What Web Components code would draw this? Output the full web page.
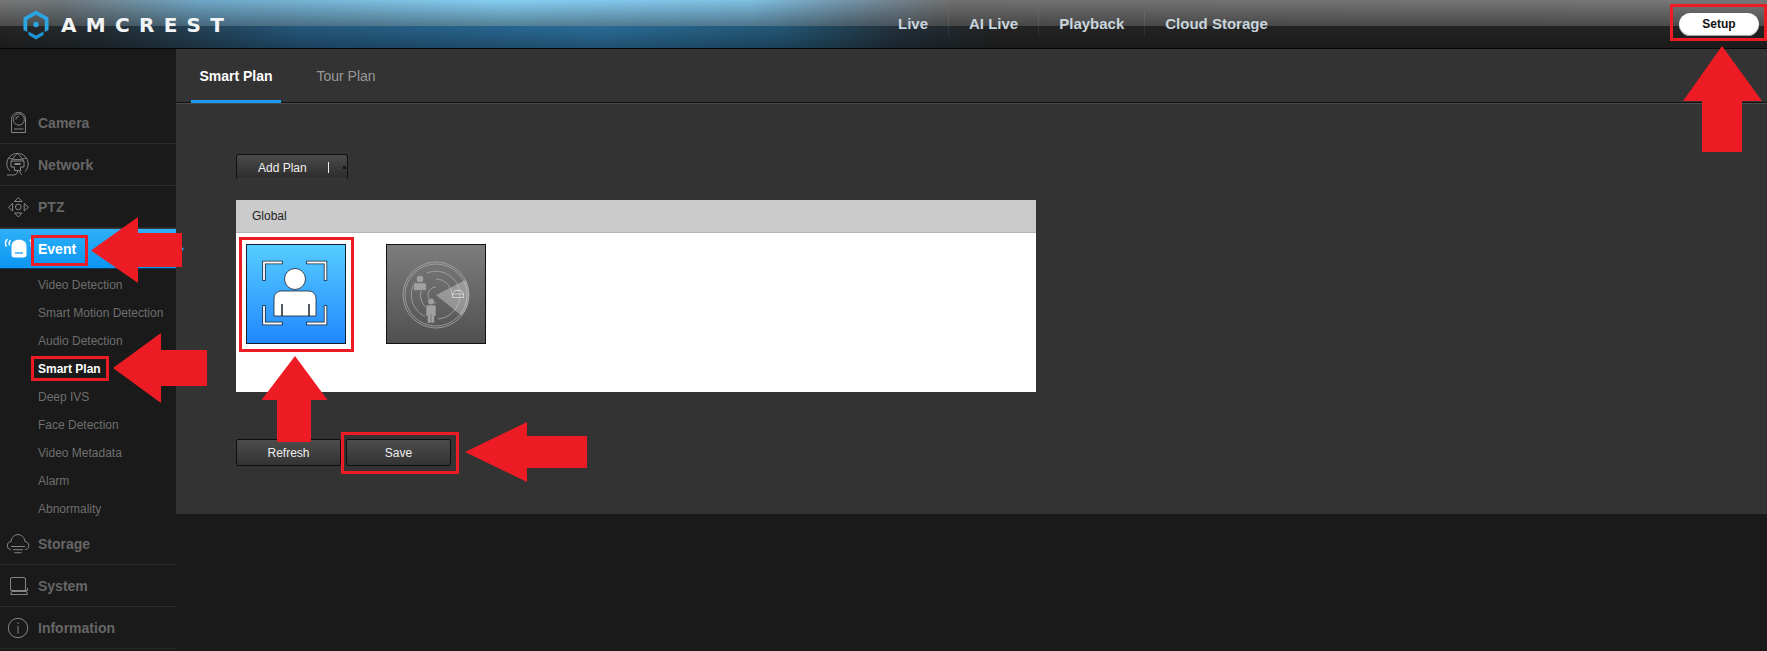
<!DOCTYPE html>
<html>
<head>
<meta charset="utf-8">
<title>Smart Plan</title>
<style>
    html, body{ margin:0; padding:0; background:#1a1a1a; }
    body{ width:1767px; height:651px; overflow:hidden; position:relative; font-family:"Liberation Sans", Arial, sans-serif; }
</style>
</head>
<body>
<app-header>
    <top-link slot="nav">Live</top-link>
    <top-link slot="nav">AI Live</top-link>
    <top-link slot="nav">Playback</top-link>
    <top-link slot="nav" last>Cloud Storage</top-link>
</app-header>
<page-body>
    <side-menu slot="side"></side-menu>
    <plan-page slot="main"></plan-page>
</page-body>
<red-marks></red-marks>

<script>
const ICONS = {
    camera: `<path d="M11.5 132.500V119.500C11.500 115 14.500 112.500 18.500 112.500C22.500 112.500 25.500 115 25.500 119.500V132.500Z"/><circle cx="18.800" cy="119.500" r="5.600"/><path d="M15.800 119.500A3 3 0 0 1 18.800 116.500"/><path d="M14 129H23.500"/>`,
    network: `<path d="M10 171C7.500 168.500 6.800 166.500 6.800 164C6.800 158 11.500 153.400 17.500 153.400C23.500 153.400 28.200 158 28.200 164C28.200 166.500 27.300 169 25 171.500"/><path d="M9 158C13 160 22 160 26 158M17.500 153.500C13.500 157 12 159.500 11.500 161M17.500 153.500C21.500 157 23 159.500 23.500 161"/><path d="M11 161H24V167H20.500V170.500H14.500V167H11Z"/><path d="M14.500 163H20.500V165H14.500Z" fill="#858585" stroke="none"/><path d="M7 175H13.500C16 175 17.500 173.500 17.500 171M22 175C20.500 174 20 172.500 20 171"/>`,
    ptz: `<circle cx="18.300" cy="207" r="2.800"/><path d="M18.300 197.500L14.500 201.500H22.100ZM18.300 217L14.500 213H22.100ZM8.500 207.200L12.600 203.400V211ZM28.400 207.200L24.200 203.400V211Z"/>`,
    storage: `<path d="M11 549.500C8.500 549.500 7.300 547.500 7.300 545.500C7.300 543.200 9 541.600 11 541.600C11.300 537.500 14.500 534.600 18 534.600C21.500 534.600 24.600 537.500 25 541.600C27.200 541.600 28.800 543.200 28.800 545.500C28.800 547.500 27.500 549.500 25 549.500"/><path d="M11 546.500H25M13 549.700H23M14.500 552.700H21.500"/>`,
    system: `<rect x="10.500" y="577.500" width="15" height="13" rx="1.500"/><path d="M27.500 588V590.500H10.500"/><path d="M11.800 591.500H26.500L27.500 594.500H10.500Z"/>`,
    info: `<circle cx="18" cy="628" r="9.700"/><path d="M18 626V633.500M18 622.500V624"/>`
};

// tiny helper for shadow + template
function mount(el, html) {
    const root = el.attachShadow({ mode: "open" });
    const template = document.createElement("template");
    template.innerHTML = html;
    root.appendChild(template.content.cloneNode(true));
    return root;
}

class AppHeader extends HTMLElement{
    constructor(){
        super()
        mount(this, `
            <style>
                :host{
                    display:flex;
                    align-items:center;
                    height:48px;
                    border-bottom:1px solid #050505;
                    background:
                        linear-gradient(to bottom, rgba(0,0,0,0) 0, rgba(0,0,0,.38) 26px, rgba(0,0,0,0) 26px, rgba(0,0,0,.25) 48px),
                        linear-gradient(to right, #787878 0, #70777b 60px, #6fa6c6 200px, #86cef2 500px, #7fbfe2 750px, #7393a8 850px, #707070 950px, #787878 1767px) 0 0 / 100% 26px no-repeat,
                        linear-gradient(to right, #242424 0, #242c32 100px, #24587c 300px, #2a6c98 600px, #235776 780px, #22303a 900px, #232323 1000px, #232323 1767px) 0 26px / 100% 22px no-repeat;
                    color:#fff;
                }
                .logo{
                    display:flex;
                    align-items:center;
                    margin-left:23px;
                    padding-top:1px;
                    width:875px;
                    flex:none;
                }
                .logo svg{ display:block; flex:none; }
                .word{
                    margin-left:12px;
                    font:bold 20px "DejaVu Sans", sans-serif;
                    letter-spacing:9.3px;
                    line-height:24px;
                    color:#f2f4f5;
                }
                nav{ display:flex; align-items:center; flex:1; }
                .setup{
                    width:80px;
                    height:23px;
                    margin-right:8px;
                    border-radius:11.5px;
                    background:#fff;
                    box-shadow:inset 0 -1px 1px #999;
                    color:#111;
                    font:bold 12px "Liberation Sans", Arial, sans-serif;
                    display:flex;
                    align-items:center;
                    justify-content:center;
                }
            </style>
            <div class="logo">
                <svg width="26" height="30" viewBox="0 0 26 30">
                    <path d="M13 0.500L25.500 7.500V20L21.800 22V9.800L13 4.800L4.200 9.800V22L0.500 20V7.500Z" fill="#2ba6e2"/>
                    <path d="M5.500 21.500L13 25.500L20.500 21.500V25L13 29.500L5.500 25Z" fill="#1d94d6"/>
                    <circle cx="13" cy="14.500" r="2.700" fill="#2ba6e2"/>
                </svg>
                <span class="word">AMCREST</span>
            </div>
            <nav><slot name="nav"></slot></nav>
            <div class="setup">Setup</div>
        `)
    }
}

class TopLink extends HTMLElement{
    constructor(){
        super()
        mount(this, `
            <style>
                :host{
                    display:block;
                    padding:0 20px 0 0;
                    margin-right:20px;
                    height:26px;
                    font:bold 15px/26px "Liberation Sans", Arial, sans-serif;
                    color:#c9d5dc;
                    border-right:1px solid rgba(255,255,255,.07);
                }
                :host([last]){ border-right:none; }
            </style>
            <slot></slot>
        `)
    }
}

class PageBody extends HTMLElement{
    constructor(){
        super()
        mount(this, `
            <style>
                :host{ display:flex; align-items:flex-start; height:602px; }
                .side{ width:176px; flex:none; }
                .main{ flex:1; min-width:0; }
            </style>
            <div class="side"><slot name="side"></slot></div>
            <div class="main"><slot name="main"></slot></div>
        `)
    }
}

class SideItem extends HTMLElement{
    constructor(){
        super()
        const top = Number(this.getAttribute("top"))
        const icon = ICONS[this.getAttribute("icon")]
        mount(this, `
            <style>
                :host{
                    display:flex;
                    align-items:center;
                    box-sizing:border-box;
                    height:42px;
                    padding-left:38px;
                    position:relative;
                    border-bottom:1px solid #2a2a2a;
                    font:bold 14px "Liberation Sans", Arial, sans-serif;
                    color:#666;
                }
                svg{
                    position:absolute;
                    left:0;
                    top:0;
                    width:40px;
                    height:42px;
                    fill:none;
                    stroke:#858585;
                    stroke-width:1;
                }
            </style>
            <svg viewBox="0 ${top} 40 42">${icon}</svg>
            <slot></slot>
        `)
    }
}

class SideActive extends HTMLElement{
    constructor(){
        super()
        mount(this, `
            <style>
                :host{
                    display:flex;
                    align-items:center;
                    box-sizing:border-box;
                    height:41px;
                    padding-left:38px;
                    position:relative;
                    background:linear-gradient(to bottom, #2fb0f7 0, #0a96f2 100%);
                    border-top:1px solid #3a3a3a;
                    border-bottom:1px solid #0d3a5c;
                    font:bold 14px "Liberation Sans", Arial, sans-serif;
                    color:#fff;
                }
                :host::after{
                    content:"";
                    position:absolute;
                    left:100%;
                    top:12px;
                    border-left:8px solid #1aa0f4;
                    border-top:8px solid transparent;
                    border-bottom:8px solid transparent;
                }
                svg{ position:absolute; left:0; top:0; }
            </style>
            <svg width="36" height="39" viewBox="0 229 36 39">
                <path d="M11.500 255V246.500C11.500 242 14.500 239.800 19 239.800C23.500 239.800 26.500 242 26.500 246.500V255C26.500 256.500 25.500 257.500 24 257.500H14C12.500 257.500 11.500 256.500 11.500 255Z" fill="#fff"/>
                <path d="M15 253H23" stroke="#1a9ff2" stroke-width="1.300"/>
                <g fill="none" stroke="#fff" stroke-width="1.400">
                    <path d="M6.500 246.500C4.800 244 5.300 241.500 7.300 239"/>
                    <path d="M9.800 245.500C8.700 243.700 9 242 10.500 240.300"/>
                    <path d="M30.800 246.500C32 244 31.600 241.800 30 239.500"/>
                </g>
            </svg>
            <slot></slot>
        `)
    }
}

class SideSub extends HTMLElement{
    constructor(){
        super()
        mount(this, `
            <style>
                :host{
                    display:flex;
                    align-items:center;
                    height:28px;
                    padding-left:38px;
                    font:12px "Liberation Sans", Arial, sans-serif;
                    color:#6e6e6e;
                }
                :host([on]){ color:#fff; font-weight:bold; }
            </style>
            <slot></slot>
        `)
    }
}

class SideMenu extends HTMLElement{
    constructor(){
        super()
        mount(this, `
            <style>
                :host{ display:block; padding-top:53px; }
                .subs{ padding-top:2px; }
            </style>
            <side-item icon="camera" top="102">Camera</side-item>
            <side-item icon="network" top="144">Network</side-item>
            <side-item icon="ptz" top="186">PTZ</side-item>
            <side-active>Event</side-active>
            <div class="subs">
                <side-sub>Video Detection</side-sub>
                <side-sub>Smart Motion Detection</side-sub>
                <side-sub>Audio Detection</side-sub>
                <side-sub on>Smart Plan</side-sub>
                <side-sub>Deep IVS</side-sub>
                <side-sub>Face Detection</side-sub>
                <side-sub>Video Metadata</side-sub>
                <side-sub>Alarm</side-sub>
                <side-sub>Abnormality</side-sub>
            </div>
            <side-item icon="storage" top="523">Storage</side-item>
            <side-item icon="system" top="565">System</side-item>
            <side-item icon="info" top="607">Information</side-item>
        `)
    }
}

class DarkButton extends HTMLElement{
    constructor(){
        super()
        mount(this, `
            <style>
                :host{
                    display:flex;
                    align-items:center;
                    justify-content:center;
                    box-sizing:border-box;
                    width:105px;
                    height:27px;
                    border:1px solid #0e0e0e;
                    border-radius:2px;
                    background:linear-gradient(to bottom, #4c4c4c 0, #333 100%);
                    color:#eee;
                    font:12px "Liberation Sans", Arial, sans-serif;
                }
            </style>
            <slot></slot>
        `)
    }
}

class SplitButton extends HTMLElement{
    constructor(){
        super()
        mount(this, `
            <style>
                :host{
                    display:flex;
                    align-items:center;
                    box-sizing:border-box;
                    width:112px;
                    height:25px;
                    padding:2px 0 0 21px;
                    border:1px solid #111;
                    border-bottom-color:#3a3a3a;
                    border-radius:3px 3px 0 0;
                    background:linear-gradient(to bottom, #4a4a4a 0, #2d2d2d 100%);
                    color:#f0f0f0;
                    font:12px "Liberation Sans", Arial, sans-serif;
                }
                .bar{ width:1px; height:11px; background:#eee; margin-left:21px; }
                .dot{ width:3px; height:3px; background:#151515; margin:0 0 1px 14px; }
            </style>
            <slot></slot>
            <span class="bar"></span>
            <span class="dot"></span>
        `)
    }
}

class PlanTile extends HTMLElement{
    constructor(){
        super()
        const kind = this.getAttribute("kind")
        const faceIcon = `
            <g fill="none" stroke="#1a2430" stroke-width="3.400" stroke-linecap="square">
                <path d="M35 18.500H18V35M62 18.500H79.500V35M18 63V79.500H35M79.500 63V79.500H62"/>
            </g>
            <g fill="none" stroke="#fff" stroke-width="1.800" stroke-linecap="square">
                <path d="M35 18.500H18V35M62 18.500H79.500V35M18 63V79.500H35M79.500 63V79.500H62"/>
            </g>
            <circle cx="49" cy="35" r="10.500" fill="#fff" stroke="#1a2430" stroke-width=".8"/>
            <path d="M28 72V55C28 50 31 47 36 47H62C67 47 70 50 70 55V72Z" fill="#fff" stroke="#1a2430" stroke-width=".8"/>
            <path d="M36 60V72M63 60V72" stroke="#1a2430" stroke-width="1.500"/>`
        const radarIcon = `
            <g fill="none" stroke="#a8a8a8" stroke-width=".8">
                <circle cx="50" cy="51" r="33"/>
                <circle cx="50" cy="51" r="31"/>
                <path d="M29 38A24 24 0 0 0 39 72.500M52 75A24 24 0 0 0 74 51A24 24 0 0 0 41 29"/>
                <path d="M35 47A16 16 0 0 0 43 65.500M50 35A16 16 0 0 1 66 51"/>
                <path d="M50 43A8 8 0 1 0 50 59"/>
            </g>
            <path d="M50 51L79.400 36A33 33 0 0 1 75.600 71.800Z" fill="#dcdcdc" fill-opacity=".42"/>
            <path d="M66.500 53.500V49.500L69 46.500H75L77.500 49.500V53.500Z" fill="none" stroke="#d8d8d8" stroke-width=".9"/>
            <path d="M66 50H78" stroke="#d8d8d8" stroke-width=".8"/>
            <circle cx="34" cy="35" r="3.300" fill="#a0a0a0"/>
            <path d="M27.500 46.500V41C27.500 39.500 29 38.800 30 38.800H38C39 38.800 40.500 39.500 40.500 41V46.500Z" fill="#a0a0a0" stroke="#5c5c5c" stroke-width=".5"/>
            <circle cx="45" cy="57.500" r="2.900" fill="#a0a0a0"/>
            <path d="M40 72V63C40 61.500 41 61 42 61H48C49 61 50 61.500 50 63V72H48.500V79H41.500V72Z" fill="#a0a0a0" stroke="#5c5c5c" stroke-width=".5"/>
            <path d="M45 70V79" stroke="#666" stroke-width=".7"/>`
        mount(this, `
            <style>
                :host{
                    display:block;
                    box-sizing:border-box;
                    width:100px;
                    height:100px;
                    border:1px solid #16202c;
                }
                :host([kind="face"]){ background:linear-gradient(to bottom, #56ccff 0, #2288ff 100%); }
                :host([kind="radar"]){ background:linear-gradient(to bottom, #7d7d7d 0, #505050 100%); border-color:#141414; }
                svg{ display:block; margin:-1px; }
            </style>
            <svg width="100" height="100" viewBox="0 0 100 100">${kind === "face" ? faceIcon : radarIcon}</svg>
        `)
    }
}

class PlanPanel extends HTMLElement{
    constructor(){
        super()
        mount(this, `
            <style>
                :host{ display:block; width:800px; height:192px; background:#fff; margin-top:21px; }
                header{
                    box-sizing:border-box;
                    height:33px;
                    padding-left:16px;
                    display:flex;
                    align-items:center;
                    background:#cbcbcb;
                    border-bottom:1px solid #b4b4b4;
                    color:#222;
                    font:12px "Liberation Sans", Arial, sans-serif;
                }
                .tiles{ display:flex; gap:40px; padding:11px 0 0 10px; }
            </style>
            <header><slot name="title"></slot></header>
            <div class="tiles"><slot></slot></div>
        `)
    }
}

class PlanPage extends HTMLElement{
    constructor(){
        super()
        mount(this, `
            <style>
                :host{ display:block; height:465px; background:#333; }
                .tabs{
                    box-sizing:border-box;
                    height:55px;
                    display:flex;
                    align-items:stretch;
                    padding-left:15px;
                    gap:20px;
                    border-bottom:1px solid #4c4c4c;
                    box-shadow:inset 0 -1px 0 #111;
                }
                .tab{
                    box-sizing:border-box;
                    display:flex;
                    align-items:center;
                    justify-content:center;
                    height:54px;
                    width:90px;
                    padding-top:3px;
                    font:14px "Liberation Sans", Arial, sans-serif;
                    color:#999;
                    border-bottom:3px solid transparent;
                }
                .tab.on{ color:#fff; font-weight:bold; border-bottom-color:#1c9cf0; }
                .body{ padding:50px 0 0 60px; }
                .row{ display:flex; gap:5px; margin-top:47px; }
            </style>
            <div class="tabs">
                <div class="tab on">Smart Plan</div>
                <div class="tab">Tour Plan</div>
            </div>
            <div class="body">
                <split-button>Add Plan</split-button>
                <plan-panel>
                    <span slot="title">Global</span>
                    <plan-tile kind="face"></plan-tile>
                    <plan-tile kind="radar"></plan-tile>
                </plan-panel>
                <div class="row">
                    <dark-button>Refresh</dark-button>
                    <dark-button>Save</dark-button>
                </div>
            </div>
        `)
    }
}

// the red arrows and boxes somebody drew on the screenshot
class RedMarks extends HTMLElement{
    constructor(){
        super()
        const box = (x, y, w, h) => `<rect x="${x}" y="${y}" width="${w}" height="${h}" fill="none" stroke="#ed1c24" stroke-width="3"/>`
        mount(this, `
            <style>
                :host{ position:absolute; left:0; top:0; width:1767px; height:651px; pointer-events:none; }
                svg{ display:block; }
            </style>
            <svg width="1767" height="651" viewBox="0 0 1767 651">
                ${box(1671.5, 5.5, 94, 34)}
                ${box(32.5, 236.5, 54, 28)}
                ${box(32.5, 357.5, 75, 22)}
                ${box(240.5, 238.5, 112, 112)}
                ${box(342.5, 433.5, 115, 39)}
                <g fill="#ed1c24">
                    <path d="M1722 46L1762 101H1742V152H1702V101H1683Z"/>
                    <path d="M91 250.500L138 217V233H182V267H138V283Z"/>
                    <path d="M113 368L161 333V350H207V386H161V403Z"/>
                    <path d="M295 356L327.500 400H311V442H277V400H261.500Z"/>
                    <path d="M465 452L527 422V436H587V468H527V482Z"/>
                </g>
            </svg>
        `)
    }
}

customElements.define("top-link", TopLink);
customElements.define("app-header", AppHeader);
customElements.define("page-body", PageBody);
customElements.define("side-item", SideItem);
customElements.define("side-active", SideActive);
customElements.define("side-sub", SideSub);
customElements.define("side-menu", SideMenu);
customElements.define("dark-button", DarkButton);
customElements.define("split-button", SplitButton);
customElements.define("plan-tile", PlanTile);
customElements.define("plan-panel", PlanPanel);
customElements.define("plan-page", PlanPage);
customElements.define("red-marks", RedMarks);
</script>
</body>
</html>
